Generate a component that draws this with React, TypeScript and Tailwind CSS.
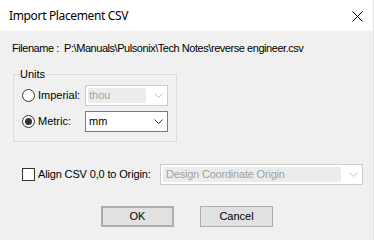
import React from "react";

const Chevron = ({ color }: { color: string }) => (
  <svg width="9" height="5" viewBox="0 0 9 5" className="block">
    <polyline points="0.5,0.5 4.5,4.5 8.5,0.5" fill="none" stroke={color} strokeWidth="1" />
  </svg>
);

const Radio = ({ checked }: { checked?: boolean }) => (
  <div className="w-[13px] h-[13px] rounded-full border border-[#333333] bg-white flex items-center justify-center shrink-0">
    {checked && <div className="w-[7px] h-[7px] rounded-full bg-[#333333]" />}
  </div>
);

export default function App() {
  return (
    <div
      className="w-[374px] h-[240px] bg-[#f0f0f0] flex flex-col border-r border-[#e3e3e3] text-[11px] leading-[13px] text-black overflow-hidden"
      style={{ fontFamily: '"Liberation Sans", Arial, sans-serif' }}
    >
      {/* Title bar */}
      <div className="h-[31px] bg-white flex items-center justify-between pl-[9px] pr-[10px] shrink-0">
        <span
          className="text-[12px] leading-[16px] tracking-[-0.35px] text-black"
          style={{ fontFamily: '"Noto Sans", "Open Sans", sans-serif' }}
        >
          Import Placement CSV
        </span>
        <svg width="11" height="11" viewBox="0 0 11 11" className="block mt-[1px]">
          <line x1="0.5" y1="0.5" x2="10.5" y2="10.5" stroke="#000" strokeWidth="1" />
          <line x1="10.5" y1="0.5" x2="0.5" y2="10.5" stroke="#000" strokeWidth="1" />
        </svg>
      </div>

      {/* Filename */}
      <div className="mt-[11px] pl-[12px] whitespace-pre tracking-[-0.45px]">
        {"Filename :  P:\\Manuals\\Pulsonix\\Tech Notes\\reverse engineer.csv"}
      </div>

      {/* Units group */}
      <fieldset className="ml-[13px] mt-[13px] w-[164px] border border-[#dcdcdc] px-[6px] pb-[9px]">
        <legend className="px-0 leading-[13px]">Units</legend>
        <div className="flex flex-col gap-[5px] mt-[4px]">
          <div className="flex items-center">
            <div className="ml-[2px]">
              <Radio />
            </div>
            <span className="ml-[3px] w-[47px]">Imperial:</span>
            <div className="w-[83px] h-[21px] border border-[#cccccc] bg-white flex items-center pl-[2px] pr-[4px]">
              <div className="flex-1 h-[15px] bg-[#ececec] flex items-center pl-[1px] text-[#a2a2a2]">thou</div>
              <div className="w-[17px] flex justify-end">
                <Chevron color="#bfbfbf" />
              </div>
            </div>
          </div>
          <div className="flex items-center">
            <div className="ml-[2px]">
              <Radio checked />
            </div>
            <span className="ml-[3px] w-[47px]">Metric:</span>
            <div className="w-[83px] h-[21px] border border-[#7a7a7a] bg-white flex items-center pl-[2px] pr-[4px]">
              <div className="flex-1 flex items-center pl-[1px]">mm</div>
              <div className="w-[17px] flex justify-end">
                <Chevron color="#333333" />
              </div>
            </div>
          </div>
        </div>
      </fieldset>

      {/* Align row */}
      <div className="mt-[22px] flex items-center pl-[22px]">
        <div className="w-[13px] h-[13px] border border-[#333333] bg-white shrink-0" />
        <span className="ml-[3px] w-[122px] tracking-[-0.15px]">Align CSV 0,0 to Origin:</span>
        <div className="w-[203px] h-[21px] border border-[#cccccc] bg-white flex items-center pl-[2px] pr-[4px]">
          <div className="flex-1 h-[15px] bg-[#ececec] flex items-center pl-[3px] text-[#a2a2a2] tracking-[-0.2px]">
            Design Coordinate Origin
          </div>
          <div className="w-[17px] flex justify-end">
            <Chevron color="#bfbfbf" />
          </div>
        </div>
      </div>

      {/* Buttons */}
      <div className="mt-[21px] flex pl-[101px] gap-[26px]">
        <button className="w-[73px] h-[21px] border-2 border-[#adadad] bg-[#e1e1e1] flex items-center justify-center">
          OK
        </button>
        <button className="w-[73px] h-[21px] border border-[#adadad] bg-[#e1e1e1] flex items-center justify-center">
          Cancel
        </button>
      </div>
    </div>
  );
}
